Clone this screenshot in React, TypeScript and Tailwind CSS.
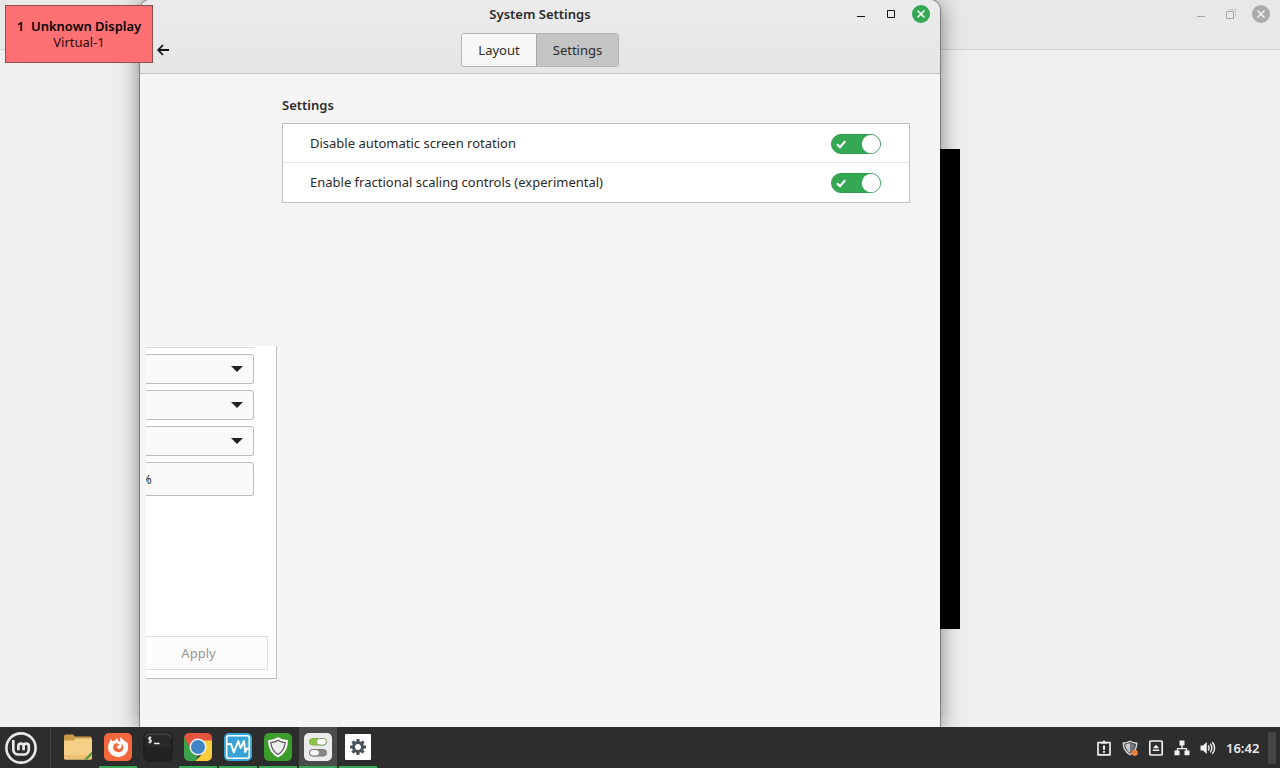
import React, { useState } from "react";

function MintIcon() {
  return (
    <svg viewBox="0 0 32 32" className="size-8" fill="none" stroke="#e8e8e8" aria-hidden="true">
      <circle cx="16" cy="16" r="14.600" strokeWidth="2.600" />
      <path d="M8.300 8v9.500a5 5 0 0 0 5 5h5.500a5 5 0 0 0 5-5v-3.300a2.600 2.600 0 0 0-5.200 0v4v-4a2.600 2.600 0 0 0-5.200 0v4" strokeWidth="2.700" />
    </svg>
  );
}

function FolderIcon() {
  return (
    <svg viewBox="0 0 28 28" className="size-7" aria-hidden="true">
      <path d="M0 3.500Q0 1.500 2 1.500h6.500q1 0 1.500 1l.8 1H26q2 0 2 2V13H0z" fill="#c99a4c" />
      <path d="M0 9Q0 7.500 1.500 7.500h7.800l2.200-2H26.500Q28 5.500 28 7v18q0 1.500-1.500 1.500h-25Q0 26.500 0 25z" fill="#f5cf86" />
      <path d="M0 22v3q0 1.500 1.500 1.500h25Q28 26.500 28 25v-3z" fill="#edc173" />
      <path d="M28 18.500v3.200l-4.800 4.800h-3.200z" fill="#4d9a3d" />
    </svg>
  );
}

function FirefoxIcon() {
  return (
    <svg viewBox="0 0 28 28" className="size-7" aria-hidden="true">
      <rect width="28" height="28" rx="5" fill="#f2683c" />
      <path d="M5.800 8.500q.3-1.500 1.200-2.700l1 2.500q1.200-.6 2.500-.4 1-2 3-2.900-.2 2 1.300 3.200L16.500 9q-1-2.500.2-5 .8 1.700 3.300 3.300 1.500 1 2.200 2.700l.3-1.700q1.700 2.500 1.700 5.900A10 10 0 0 1 4 14.200q0-3.200 1.800-5.700z" fill="#fff" />
      <path d="M11.200 10.500q1.600-1 2.800.4l1.700.3q-.4 1.200-1.700 1.400-1.700.7-1.200 2.200 1.400 1.700 3.600.6 2.400-1.600.6-4.900 2.800 1.500 2.500 4.700-.8 3.700-5 4-4.700-.2-5.500-4.700 0-2.500 2.200-4z" fill="#f2683c" />
    </svg>
  );
}

function TerminalIcon() {
  return (
    <svg viewBox="0 0 30 30" className="size-[30px]" aria-hidden="true">
      <rect x="1" y="1" width="28" height="28" rx="5" fill="#292929" stroke="#151515" />
      <path d="M1.500 15h27v9q0 4.500-4.500 4.500H6Q1.500 28.500 1.500 24z" fill="#222" />
      <path d="M2 5.500Q2.500 2 6 2h18q3.500 0 4 3.500" fill="none" stroke="#555" />
      <path d="M8.500 5.500H7q-1.300 0-1.300 1.100T7 7.900t1.300 1.200T7 10.200H5.500M7 4.200v7.200" fill="none" stroke="#f2f2f2" strokeWidth="1.200" />
      <path d="M11 11.500h5.500" stroke="#f2f2f2" strokeWidth="1.500" />
    </svg>
  );
}

function ChromeIcon() {
  return (
    <svg viewBox="0 0 28 28" className="size-7" aria-hidden="true">
      <clipPath id="chrome-tile">
        <rect width="28" height="28" rx="5" />
      </clipPath>
      <g clipPath="url(#chrome-tile)">
        <path d="M0 0h28v8H14L7 18 0 4z" fill="#e4533e" />
        <path d="M0 4l7.500 14 7 3.500L12 28H0z" fill="#3ca14b" />
        <path d="M14 7.500h14V28H11.500L21 18z" fill="#f9ce3c" />
        <circle cx="14" cy="14" r="8.500" fill="#f1f1f1" />
        <circle cx="14" cy="14" r="7" fill="#3f85c5" />
      </g>
    </svg>
  );
}

function MonitorIcon() {
  return (
    <svg viewBox="0 0 28 28" className="size-7" fill="none" stroke="#fff" aria-hidden="true">
      <rect width="28" height="28" rx="5" fill="#37a3d6" stroke="none" />
      <rect x="2.700" y="2.700" width="22.600" height="22.600" rx="2" strokeWidth="1.600" />
      <path d="M3 11h4l2.800 8.500L14.300 8l2.200 7L20 8l1.200 11L23 15.500h2.500" strokeWidth="1.900" strokeLinejoin="round" />
    </svg>
  );
}

function ShieldIcon() {
  return (
    <svg viewBox="0 0 28 28" className="size-7" aria-hidden="true">
      <rect width="28" height="28" rx="5" fill="#3c9c2c" />
      <path d="M14 4q4 3 10 3 0 12.500-10 17.500Q4 19.500 4 7q6 0 10-3z" fill="#fff" />
      <path d="M14 7.300q3 2 7.200 2.400-.8 8-7.200 11.700Q7.600 17.700 6.800 9.700 11 9.300 14 7.300z" fill="#ededed" stroke="#555" strokeWidth="1.200" />
    </svg>
  );
}

function SwitchesIcon() {
  return (
    <svg viewBox="0 0 28 28" className="size-7" aria-hidden="true">
      <rect width="28" height="28" rx="5" fill="#ebebeb" />
      <rect x="5.500" y="5.500" width="17" height="6.500" rx="3.250" fill="#8dc63f" stroke="#7fae42" />
      <rect x="12.500" y="5.500" width="10" height="6.500" rx="3.250" fill="#fff" stroke="#8b9b79" />
      <rect x="5.500" y="16.500" width="17" height="6.500" rx="3.250" fill="#888" stroke="#777" />
      <rect x="5.500" y="16.500" width="10" height="6.500" rx="3.250" fill="#f5f5f5" stroke="#777" />
    </svg>
  );
}

function GearIcon() {
  return (
    <svg viewBox="0 0 26 26" className="size-[26px]" aria-hidden="true">
      <rect width="26" height="26" rx="1" fill="#fff" />
      <g stroke="#4a525c" strokeWidth="3">
        <path d="M13 5v16M5 13h16M7.400 7.400l11.200 11.200M18.600 7.400 7.400 18.600" />
      </g>
      <circle cx="13" cy="13" r="4.500" fill="#fff" stroke="#4a525c" strokeWidth="3.200" />
    </svg>
  );
}

const apps = [
  { name: "Files", icon: FolderIcon, running: false, active: false },
  { name: "Firefox", icon: FirefoxIcon, running: true, active: false },
  { name: "Terminal", icon: TerminalIcon, running: false, active: false },
  { name: "Chrome", icon: ChromeIcon, running: true, active: false },
  { name: "System Monitor", icon: MonitorIcon, running: true, active: false },
  { name: "Update Manager", icon: ShieldIcon, running: true, active: false },
  { name: "System Settings", icon: SwitchesIcon, running: true, active: true },
  { name: "Preferences", icon: GearIcon, running: true, active: false },
];

function Taskbar() {
  return (
    <footer className="relative z-10 flex h-[41px] shrink-0 items-stretch bg-[#2d2d2e] text-white">
      <button aria-label="Menu" className="flex w-[51px] items-center border-r border-[#414141] pl-[5px]">
        <MintIcon />
      </button>
      <nav className="ml-2 flex gap-0.5">
        {apps.map(({ name, icon: Icon, running, active }) => (
          <button
            key={name}
            aria-label={name}
            className={
              "flex w-[38px] items-center justify-center border-b-2 pt-px " +
              (running ? "border-[#3aa757] " : "border-transparent ") +
              (active ? "bg-[#4b4b4c]" : "")
            }
          >
            <Icon />
          </button>
        ))}
      </nav>
      <div className="ml-auto flex items-center gap-2.5 pt-px">
        <button aria-label="Reports">
          <svg viewBox="0 0 16 16" className="size-4" fill="none" stroke="#f0f0f0" aria-hidden="true">
            <path d="M5 2.500H2v12.300h12V2.500h-3" strokeWidth="1.700" strokeLinejoin="round" />
            <path d="M4.500 3.800V1.800h2.200a1.300 1.300 0 0 1 2.600 0h2.200v2z" fill="#f0f0f0" stroke="none" />
            <path d="M8 5.500v4.300M8 11v1.800" strokeWidth="2" />
          </svg>
        </button>
        <button aria-label="Updates">
          <svg viewBox="0 0 16 16" className="size-4" aria-hidden="true">
            <path d="M8 .5q3 1.800 7.500 2 0 9-7.500 13Q.5 11.500.5 2.500 5 2.300 8 .5z" fill="#d8d8d8" />
            <path d="M8 2.500q2 1.200 5.500 1.700-.6 6-5.500 9.100-4.900-3.100-5.500-9.100Q6 3.700 8 2.500z" fill="#77787e" stroke="#3b3b3d" />
            <path d="M8 3v10Q4 10 3.200 4.500 6 4.200 8 3z" fill="#c9c9cd" />
            <circle cx="12.800" cy="12.800" r="3.100" fill="#e8803c" />
          </svg>
        </button>
        <button aria-label="Removable drives">
          <svg viewBox="0 0 16 16" className="size-4" fill="none" aria-hidden="true">
            <rect x="1.800" y="1" width="12.400" height="14" rx="1" stroke="#f0f0f0" strokeWidth="1.700" />
            <path d="M4.800 8.200 8 4.800l3.200 3.400zM4.800 9.500h6.400v1.400H4.800z" fill="#f0f0f0" />
          </svg>
        </button>
        <button aria-label="Network">
          <svg viewBox="0 0 16 16" className="size-4" fill="#f0f0f0" aria-hidden="true">
            <path d="M5.500.5h5v5H8.700V8h4.500v2.500H15.500v4.800h-5v-4.800H12V9.300H4v1.200h1.500v4.800h-5v-4.800h2.300V8h4.500V5.500H5.500z" />
          </svg>
        </button>
        <button aria-label="Volume">
          <svg viewBox="0 0 16 16" className="size-4" fill="none" stroke="#f0f0f0" strokeWidth="1.400" aria-hidden="true">
            <path d="M.5 5.500H3L6.800 2v12L3 10.500H.5z" fill="#f0f0f0" stroke="none" />
            <path d="M8.300 5.500q1.600 2.500 0 5M10.300 3.700q3 4.300 0 8.600M12.300 2q4.600 6 0 12" />
          </svg>
        </button>
        <time className="w-8 whitespace-nowrap pt-px text-[13px] font-semibold text-[#ececec]">16:42</time>
        <button aria-label="Show desktop" className="mr-1 h-8 w-2 bg-[#444446]" />
      </div>
    </footer>
  );
}

function BackgroundWindow() {
  return (
    <section aria-label="Background window" className="flex h-full flex-col bg-[#efefef]">
      <header className="flex h-[50px] shrink-0 items-start justify-end gap-3 border-b border-[#cfcfcf] bg-[#e8e8e8] pr-2.5 pt-[5px] text-[#a6a6a6]">
        <button aria-label="Minimize" disabled>
          <svg viewBox="0 0 18 18" className="size-[18px]" stroke="currentColor" aria-hidden="true">
            <path d="M5 11.500h8" />
          </svg>
        </button>
        <button aria-label="Restore" disabled>
          <svg viewBox="0 0 18 18" className="size-[18px]" fill="none" stroke="currentColor" aria-hidden="true">
            <path d="M4.500 6.500h7v7h-7z" />
            <path d="M6.500 4.500h7v7" opacity=".5" />
          </svg>
        </button>
        <button aria-label="Close" disabled>
          <svg viewBox="0 0 18 18" className="size-[18px]" aria-hidden="true">
            <circle cx="9" cy="9" r="9" fill="#ababab" />
            <path d="m5.500 5.500 7 7m0-7-7 7" stroke="#f4f4f4" strokeWidth="1.500" />
          </svg>
        </button>
      </header>
      <div className="flex flex-1 items-center justify-center">
        <div className="h-[480px] w-[640px] bg-black" />
      </div>
    </section>
  );
}

function SwitchRow({ id, label }: { id: string; label: string }) {
  const [on, setOn] = useState(true);
  return (
    <div className="flex h-[39px] items-center justify-between pl-[27px] pr-7">
      <label htmlFor={id}>{label}</label>
      <span className="relative flex">
        <input
          id={id}
          type="checkbox"
          role="switch"
          checked={on}
          onChange={() => setOn(!on)}
          className="peer h-5 w-[50px] appearance-none rounded-full border border-[#a8a8a8] bg-[#c4c4c4] checked:border-[#2f9a4c] checked:bg-[#35a854]"
        />
        <svg viewBox="0 0 50 20" className="pointer-events-none absolute inset-0" aria-hidden="true">
          {on && <path d="m6 10.200 3 3 5.200-6" fill="none" stroke="#fff" strokeWidth="2.200" />}
          <circle cx={on ? 40 : 10} cy="10" r="9.200" fill="#fff" />
        </svg>
      </span>
    </div>
  );
}

function ComboBox({ label }: { label: string }) {
  return (
    <div className="relative">
      <select
        aria-label={label}
        className="block h-[30px] w-full appearance-none rounded-r-[3px] border border-l-0 border-[#bdbdbd] bg-[#fafafa]"
      >
        <option></option>
      </select>
      <svg viewBox="0 0 12 6" className="pointer-events-none absolute right-[11px] top-3 h-1.5 w-3" aria-hidden="true">
        <path d="M0 0h12L6 6z" fill="#222" />
      </svg>
    </div>
  );
}

function SettingsWindow() {
  const [tab, setTab] = useState("Settings");
  return (
    <section
      aria-label="System Settings"
      className="absolute inset-y-0 left-[140px] flex w-[800px] flex-col rounded-t-[10px] bg-[#f5f5f5] shadow-[0_0_0_1px_rgba(0,0,0,0.3),0_2px_22px_rgba(0,0,0,0.5)]"
    >
      <header className="flex h-[74px] shrink-0 flex-col rounded-t-[10px] border-b border-[#c6c6c6] bg-gradient-to-b from-[#ebebeb] to-[#e6e6e6]">
        <div className="grid h-[33px] grid-cols-[1fr_auto_1fr] items-start px-2.5 pt-[5px]">
          <h1 className="col-start-2 text-[13px] font-semibold leading-[18px]">System Settings</h1>
          <div className="flex justify-end gap-3 text-[#111]">
            <button aria-label="Minimize">
              <svg viewBox="0 0 18 18" className="size-[18px]" stroke="currentColor" aria-hidden="true">
                <path d="M5 11.500h8" />
              </svg>
            </button>
            <button aria-label="Maximize">
              <svg viewBox="0 0 18 18" className="size-[18px]" fill="none" stroke="currentColor" aria-hidden="true">
                <path d="M5.500 5.500h7v7h-7z" />
              </svg>
            </button>
            <button aria-label="Close">
              <svg viewBox="0 0 18 18" className="size-[18px]" aria-hidden="true">
                <circle cx="9" cy="9" r="9" fill="#35a854" />
                <path d="m5.500 5.500 7 7m0-7-7 7" stroke="#fff" strokeWidth="1.500" />
              </svg>
            </button>
          </div>
        </div>
        <div className="grid grid-cols-[1fr_auto_1fr] items-center">
          <button aria-label="Back" className="ml-[17px] w-3">
            <svg viewBox="0 0 12 12" className="size-3" fill="none" stroke="#111" strokeWidth="1.800" aria-hidden="true">
              <path d="M12 6H1.500M6 1 1.200 6 6 11" />
            </svg>
          </button>
          <div role="tablist" className="flex h-[34px] overflow-hidden rounded-[3px] border border-[#b5b5b5]">
            {["Layout", "Settings"].map((name) => (
              <button
                key={name}
                role="tab"
                aria-selected={tab === name}
                onClick={() => setTab(name)}
                className={
                  "border-[#a8a8a8] pt-0.5 " +
                  (name === "Layout" ? "w-[74px] " : "w-[82px] border-l ") +
                  (tab === name ? "bg-[#c4c4c4]" : "bg-[#f7f7f7]")
                }
              >
                {name}
              </button>
            ))}
          </div>
        </div>
      </header>
      <div className="flex flex-1 items-start gap-[5px] pl-1.5 pr-[30px]">
        <aside className="mt-[272px] flex h-[333px] w-[131px] flex-col overflow-hidden border-b border-r border-[#bdbdbd] bg-white">
          <div className="mr-[22px] mb-1.5 h-0.5 border-b border-[#d6d6d6]" />
          <form className="mr-[22px] flex flex-col gap-1.5">
            <ComboBox label="Resolution" />
            <ComboBox label="Refresh Rate" />
            <ComboBox label="Rotation" />
            <input
              aria-label="Scale"
              defaultValue="%"
              className="-ml-[5px] h-[34px] rounded-r-[3px] border border-l-0 border-[#bdbdbd] bg-[#fafafa] outline-none"
            />
          </form>
          <button disabled className="mb-2 mr-2 mt-auto h-[34px] border border-l-0 border-[#dedede] bg-[#fcfcfc] pr-4 pt-0.5 text-[#969696]">
            Apply
          </button>
        </aside>
        <main className="flex-1 pt-[21px]">
          <h2 className="mb-2 font-semibold leading-5">Settings</h2>
          <div className="border border-[#bfbfbf] bg-white">
            <SwitchRow id="rotation" label="Disable automatic screen rotation" />
            <hr className="-mt-px border-[#e2e2e2]" />
            <SwitchRow id="fractional" label="Enable fractional scaling controls (experimental)" />
          </div>
        </main>
      </div>
    </section>
  );
}

export default function App() {
  return (
    <div className="flex h-screen flex-col overflow-hidden font-['Noto_Sans','Open_Sans',sans-serif] text-[13px] text-[#2b2b2b]">
      <div className="relative min-h-0 flex-1">
        <BackgroundWindow />
        <SettingsWindow />
        <div
          role="status"
          className="absolute left-[5px] top-[5px] flex h-[58px] w-[148px] flex-col items-center justify-center border border-[#8a5050] bg-[#ff7072] leading-4 text-[#2a0d0d]"
        >
          <strong className="whitespace-pre font-semibold text-black">1  Unknown Display</strong>
          <span>Virtual-1</span>
        </div>
      </div>
      <Taskbar />
    </div>
  );
}
